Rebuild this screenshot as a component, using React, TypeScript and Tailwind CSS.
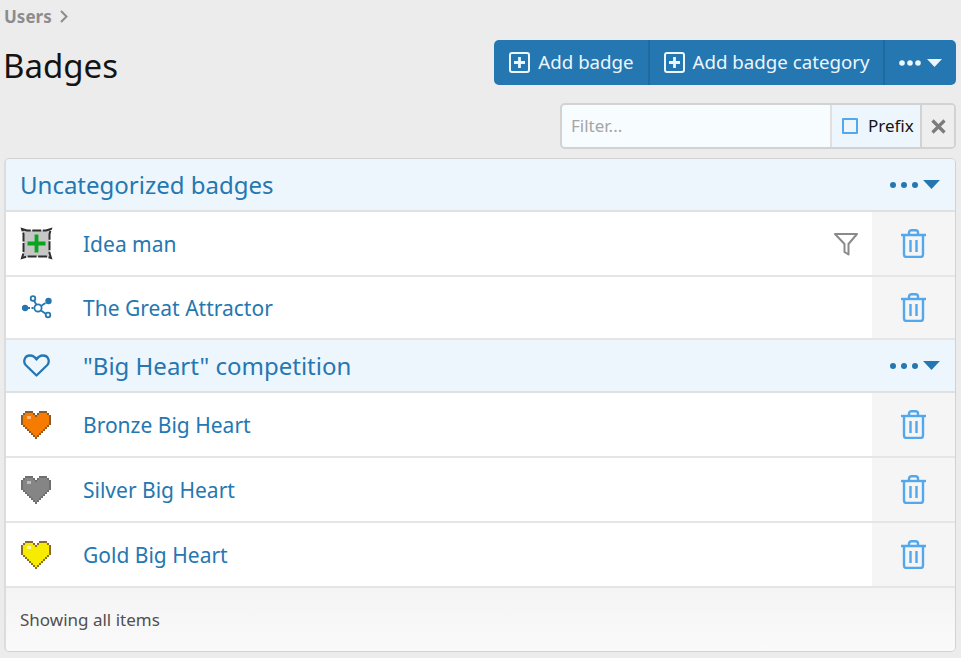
const FONT = "font-['Noto_Sans','Open_Sans',sans-serif]";

function PlusBox() {
  return (
    <svg width="21" height="21" viewBox="0 0 21 21" fill="none" className="shrink-0">
      <rect x="1" y="1" width="19" height="19" rx="2" stroke="currentColor" strokeWidth="2" />
      <path d="M10.5 5v11M5 10.5h11" stroke="currentColor" strokeWidth="2.8" />
    </svg>
  );
}

function Dots({ large }: { large?: boolean }) {
  if (large) {
    return (
      <svg width="28" height="6" viewBox="0 0 28 6" fill="currentColor">
        <circle cx="3" cy="3" r="3" />
        <circle cx="14" cy="3" r="3" />
        <circle cx="25" cy="3" r="3" />
      </svg>
    );
  }
  return (
    <svg width="22" height="6" viewBox="0 0 22 6" fill="currentColor">
      <circle cx="3" cy="3" r="2.8" />
      <circle cx="11" cy="3" r="2.8" />
      <circle cx="19" cy="3" r="2.8" />
    </svg>
  );
}

function Caret({ large }: { large?: boolean }) {
  return (
    <svg width={large ? 17 : 15} height={large ? 9 : 8} viewBox="0 0 15 8" fill="currentColor">
      <path d="M0 0h15L7.500 8z" />
    </svg>
  );
}

function Trash() {
  return (
    <svg width="25" height="29" viewBox="0 0 25 29" fill="none" stroke="#53a7ec" strokeWidth="2.4">
      <path d="M0 6h25" />
      <path d="M8 6V3.500C8 2 9 1.200 10.500 1.200h4C16 1.200 17 2 17 3.500V6" />
      <path d="M3 6v19.500C3 27 4 28 5.500 28h14c1.500 0 2.500-1 2.500-2.500V6" />
      <path d="M9.500 11v12M15.500 11v12" />
    </svg>
  );
}

function FunnelIcon() {
  return (
    <svg width="24" height="24" viewBox="0 0 24 24" fill="none" stroke="#8a8a8a" strokeWidth="2" strokeLinejoin="round">
      <path d="M1 2h22l-8.500 10v10.500l-4-2.500v-8z" />
    </svg>
  );
}

function NetworkIcon() {
  return (
    <svg width="30" height="26" viewBox="0 0 30 26" fill="none" stroke="#2577b1" strokeWidth="1.8">
      <circle cx="16" cy="13" r="3.600" />
      <circle cx="11" cy="3.500" r="2.300" />
      <circle cx="26" cy="20" r="2.300" />
      <circle cx="26.500" cy="6" r="2.300" fill="#2577b1" />
      <circle cx="3" cy="13" r="2.300" fill="#2577b1" />
      <path d="M12 5.500l2.500 4.500M19 15.500l5 3.500M19 11l4.500-3M6 13h2M9.500 13h2" />
    </svg>
  );
}

function HeartOutline() {
  return (
    <svg width="27" height="23" viewBox="0 0 27 23" fill="none" stroke="#2577b1" strokeWidth="2.300" strokeLinejoin="round">
      <path d="M13.500 21.500L2.900 11.200C-.2 8 1.300 1.500 7 1.500c3 0 5 1.500 6.500 4C15 3 17 1.500 20 1.500c5.700 0 7.200 6.500 4.100 9.700z" />
    </svg>
  );
}

const HEART_OUTER = [
  [[2, 5], [9, 12]],
  [[1, 6], [8, 13]],
  [[0, 14]],
  [[0, 14]],
  [[0, 14]],
  [[0, 14]],
  [[0, 14]],
  [[1, 13]],
  [[2, 12]],
  [[3, 11]],
  [[4, 10]],
  [[5, 9]],
  [[6, 8]],
  [[7, 7]],
];

const HEART_INNER = [
  [],
  [[2, 5], [9, 12]],
  [[1, 6], [8, 13]],
  [[1, 13]],
  [[1, 13]],
  [[1, 13]],
  [[1, 13]],
  [[2, 12]],
  [[3, 11]],
  [[4, 10]],
  [[5, 9]],
  [[6, 8]],
  [[7, 7]],
  [],
];

function PixelHeart({ fill, dark, shine }: { fill: string; dark: string; shine: string }) {
  return (
    <svg width="30" height="28" viewBox="0 0 30 28" shapeRendering="crispEdges">
      {HEART_OUTER.map((spans, r) =>
        spans.map(([a, b]) => (
          <rect key={`o${r}-${a}`} x={a * 2} y={r * 2} width={(b - a + 1) * 2} height="2" fill={dark} />
        )),
      )}
      {HEART_INNER.map((spans, r) =>
        spans.map(([a, b]) => (
          <rect key={`i${r}-${a}`} x={a * 2} y={r * 2} width={(b - a + 1) * 2} height="2" fill={fill} />
        )),
      )}
      <rect x="6" y="5" width="4" height="3" fill={shine} />
    </svg>
  );
}

function IdeaIcon() {
  return (
    <svg width="33" height="33" viewBox="0 0 33 33">
      <path d="M2 2l5 1.500h19L31 2l-1.500 5v19l1.500 5-5-1.500H7L2 31l1.500-5V7z" fill="#c6c6c6" stroke="#2e2e2e" strokeWidth="2" strokeDasharray="9 1.500" />
      <path d="M16.500 7.500v18M7.500 16.500h18" stroke="#0aa51f" strokeWidth="3.800" />
    </svg>
  );
}

function HeaderActions() {
  return (
    <span className="flex items-center gap-[5px] text-[#2577b1]">
      <Dots large />
      <Caret large />
    </span>
  );
}

function BadgeRow({
  icon,
  label,
  filter,
  height,
}: {
  icon: React.ReactNode;
  label: string;
  filter?: boolean;
  height: string;
}) {
  return (
    <div className={`flex ${height} border-b-2 border-[#e5e5e5] bg-white`}>
      <div className="flex w-[77px] shrink-0 items-center justify-center pr-[16px]">{icon}</div>
      <a className="flex-1 self-center pt-[1px] text-[21px] leading-none text-[#2577b1]">{label}</a>
      {filter && (
        <div className="flex w-[38px] items-center">
          <FunnelIcon />
        </div>
      )}
      <div className="flex w-[83px] shrink-0 items-center justify-center bg-[#f5f5f5] pb-[1px]">
        <Trash />
      </div>
    </div>
  );
}

export default function App() {
  return (
    <div className={`${FONT} h-[658px] w-[961px] overflow-hidden bg-[#ececec] pt-[6px] pr-[5px] pl-[4px] text-[#141414]`}>
      <div className="flex h-[20px] items-center gap-[8px] text-[17px] leading-none font-bold text-[#8c8c8c]">
        Users
        <svg width="8" height="13" viewBox="0 0 8 13" fill="none" stroke="#8c8c8c" strokeWidth="2">
          <path d="M1 1l5.500 5.500L1 12" />
        </svg>
      </div>

      <div className="mt-[14px] flex items-start justify-between">
        <h1 className="mt-[6px] -ml-[1px] text-[33px] leading-[40px] font-normal">Badges</h1>
        <div className="flex h-[45px] overflow-hidden rounded-[5px] bg-[#2577b1] text-[18.7px] text-[#ebf6fd]">
          <button className="flex w-[156px] items-center justify-center gap-[8px] border-r-2 border-[#1f6a9f] pl-[1px]">
            <PlusBox />
            Add badge
          </button>
          <button className="flex w-[235px] items-center justify-center gap-[8px] border-r-2 border-[#1f6a9f]">
            <PlusBox />
            Add badge category
          </button>
          <button className="flex w-[71px] items-center justify-center gap-[6px]">
            <Dots />
            <Caret />
          </button>
        </div>
      </div>

      <div className="mt-[17px] flex justify-end">
        <div className="flex h-[46px] w-[396px] overflow-hidden rounded-[5px] border-2 border-[#d2d2d2] bg-[#f7fcff] text-[17px]">
          <div className="flex w-[270px] items-center border-r-2 border-[#dfdfdf] pl-[9px] text-[#a5a5a5]">Filter...</div>
          <div className="flex w-[90px] items-center gap-[10px] border-r-2 border-[#d2d2d2] bg-[#edf6fd] pl-[10px] text-[#141414]">
            <span className="h-[16px] w-[16px] rounded-[1px] border-2 border-[#53a7ec]" />
            Prefix
          </div>
          <div className="flex flex-1 items-center justify-center bg-[#eeeeee]">
            <svg width="15" height="15" viewBox="0 0 15 15" stroke="#7c7c7c" strokeWidth="3.200">
              <path d="M1.500 1.500l12 12M13.500 1.500l-12 12" />
            </svg>
          </div>
        </div>
      </div>

      <div className="mt-[9px] overflow-hidden rounded-[5px] border border-[#d2d2d2] border-l-2 border-l-[#dcdcdc]">
        <div className="flex h-[53px] items-center justify-between border-b-2 border-[#e0e0e0] bg-[#edf6fd] pr-[15px] pl-[14px] text-[#2577b1]">
          <span className="pt-[1px] text-[24px] leading-none">Uncategorized badges</span>
          <HeaderActions />
        </div>
        <BadgeRow icon={<IdeaIcon />} label="Idea man" filter height="h-[65px]" />
        <BadgeRow icon={<NetworkIcon />} label="The Great Attractor" height="h-[63px]" />
        <div className="flex h-[53px] items-center justify-between border-b-2 border-[#e0e0e0] bg-[#edf6fd] pr-[15px] text-[#2577b1]">
          <div className="flex items-center">
            <div className="flex w-[77px] shrink-0 justify-center pr-[16px]">
              <HeartOutline />
            </div>
            <span className="pt-[1px] text-[24px] leading-none">"Big Heart" competition</span>
          </div>
          <HeaderActions />
        </div>
        <BadgeRow icon={<span className="-ml-[2px]"><PixelHeart fill="#f57c00" dark="#8a5a2a" shine="#ffb873" /></span>} label="Bronze Big Heart" height="h-[65px]" />
        <BadgeRow icon={<span className="-ml-[2px]"><PixelHeart fill="#858585" dark="#6f6f6f" shine="#bdbdbd" /></span>} label="Silver Big Heart" height="h-[65px]" />
        <BadgeRow icon={<span className="-ml-[2px]"><PixelHeart fill="#f7ec00" dark="#8a6a2a" shine="#fff6a8" /></span>} label="Gold Big Heart" height="h-[65px]" />
        <div className="flex h-[63px] items-center bg-gradient-to-b from-[#f4f4f4] to-[#fafafa] pl-[14px] text-[17px] text-[#505050]">
          Showing all items
        </div>
      </div>
    </div>
  );
}
